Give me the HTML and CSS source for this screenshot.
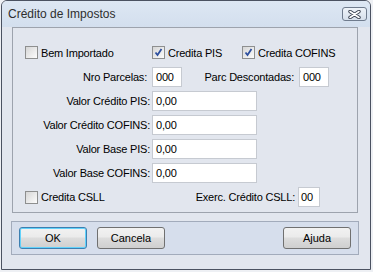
FILE: index.html
```html
<!DOCTYPE html>
<html lang="pt">
<head>
    <meta charset="UTF-8">
    <title>Crédito de Impostos</title>
    <link rel="stylesheet" href="styles.css">
</head>
<body>

    <div class="window">
        <div class="titlebar">
            <span class="title">Crédito de Impostos</span>
            <button class="close">
                <svg width="13" height="9" viewBox="0 0 13 9">
                    <path d="M2 1.5 L11 7.5 M11 1.5 L2 7.5" stroke="#3b4352" stroke-width="3.4" stroke-linecap="round"/>
                    <path d="M2 1.5 L11 7.5 M11 1.5 L2 7.5" stroke="#ffffff" stroke-width="1.6" stroke-linecap="round"/>
                </svg>
            </button>
        </div>

        <div class="group">
            <div class="row checks">
                <label class="chk chk-bem"><span class="box"></span>Bem Importado</label>
                <label class="chk chk-pis">
                    <span class="box">
                        <svg width="11" height="11" viewBox="0 0 11 11"><path d="M2.5 5.5 L4.5 8 L8.5 2" fill="none" stroke="#2d4f9e" stroke-width="1.8"/></svg>
                    </span>Credita PIS
                </label>
                <label class="chk">
                    <span class="box">
                        <svg width="11" height="11" viewBox="0 0 11 11"><path d="M2.5 5.5 L4.5 8 L8.5 2" fill="none" stroke="#2d4f9e" stroke-width="1.8"/></svg>
                    </span>Credita COFINS
                </label>
            </div>

            <div class="row">
                <span class="lbl nro">Nro Parcelas:</span>
                <span class="field small">000</span>
                <span class="lbl2">Parc Descontadas:</span>
                <span class="field small">000</span>
            </div>
            <div class="row">
                <span class="lbl">Valor Crédito PIS:</span>
                <span class="field wide">0,00</span>
            </div>
            <div class="row">
                <span class="lbl">Valor Crédito COFINS:</span>
                <span class="field wide">0,00</span>
            </div>
            <div class="row">
                <span class="lbl">Valor Base PIS:</span>
                <span class="field wide">0,00</span>
            </div>
            <div class="row">
                <span class="lbl">Valor Base COFINS:</span>
                <span class="field wide">0,00</span>
            </div>
            <div class="row">
                <div class="csll">
                    <label class="chk"><span class="box"></span>Credita CSLL</label>
                    <span class="lbl3">Exerc. Crédito CSLL:</span>
                </div>
                <span class="field tiny">00</span>
            </div>
        </div>

        <div class="buttons">
            <button class="btn default">OK</button>
            <button class="btn">Cancela</button>
            <button class="btn help">Ajuda</button>
        </div>
    </div>

</body>
</html>
```

FILE: styles.css
```css
body{
    margin: 0;
    background-color: #eef0f4;
    font-family: "Liberation Sans", Arial, sans-serif;
    font-size: 11px;
    letter-spacing: -0.2px;
    color: #000;
}

.window{
    margin-left: 1px;
    width: 370px;
    height: 270px;
    box-sizing: border-box;
    border: 1px solid #4b5261;
    border-radius: 6px 6px 0 0;
    background-color: #e2e6ee;
    overflow: hidden;
}

.titlebar{
    height: 26px;
    display: flex;
    align-items: center;
    padding: 0 3px 0 6px;
    background: linear-gradient(#dde7f3, #d3dfee);
}

.title{
    flex: 1;
    font-size: 12px;
    letter-spacing: 0;
    color: #2e2e2e;
}

.close{
    width: 25px;
    height: 14px;
    padding: 0;
    display: flex;
    align-items: center;
    justify-content: center;
    border: 1px solid #6f7b8d;
    border-radius: 3px;
    background: linear-gradient(#eef3f9, #d6dfeb);
}

/* group box */
.group{
    margin-left: 10px;
    width: 346px;
    height: 186px;
    box-sizing: border-box;
    border: 1px solid #9da3ad;
    padding: 18px 0 0 12px;
    display: flex;
    flex-direction: column;
    gap: 4px;
}

.row{
    display: flex;
    align-items: center;
    height: 20px;
}

.row.checks{
    height: 13px;
    margin-bottom: 4px;
}

.chk{
    display: flex;
    align-items: center;
    gap: 3px;
}

.chk-bem{
    width: 127px;
}

.chk-pis{
    width: 90px;
}

.box{
    width: 13px;
    height: 13px;
    box-sizing: border-box;
    border: 1px solid #8e8f8f;
    background: linear-gradient(135deg, #d6d6d6, #fcfcfc);
    display: flex;
    align-items: center;
    justify-content: center;
}

.lbl{
    width: 127px;
    box-sizing: border-box;
    text-align: right;
    padding-right: 2px;
}

.lbl.nro{
    padding-right: 5px;
}

.lbl2{
    width: 117px;
    box-sizing: border-box;
    text-align: right;
    padding-right: 5px;
}

.csll{
    width: 273px;
    display: flex;
    align-items: center;
}

.lbl3{
    margin-left: auto;
    padding-right: 3px;
}

.field{
    height: 20px;
    box-sizing: border-box;
    border: 1px solid #c6cad1;
    background-color: #fff;
    padding: 0 3px;
    line-height: 18px;
}

.field.wide{
    width: 105px;
}

.field.small{
    width: 30px;
}

.field.tiny{
    width: 22px;
    padding: 0 2px;
}

/* button panel */
.buttons{
    margin: 8px 0 0 9px;
    width: 348px;
    height: 34px;
    box-sizing: border-box;
    border: 1px solid #a2abbb;
    background-color: #d6deec;
    display: flex;
    align-items: flex-start;
    gap: 10px;
    padding: 5px 7px 0 7px;
}

.btn{
    width: 68px;
    height: 22px;
    padding: 0;
    border: 1px solid #707070;
    border-radius: 3px;
    background: linear-gradient(#f2f2f2, #ebebeb 45%, #dddddd 50%, #cfcfcf);
    font-family: "Liberation Sans", Arial, sans-serif;
    font-size: 11px;
    color: #000;
}

.btn.default{
    border-color: #3c7fb1;
    box-shadow: inset 0 0 0 1px #62d2fb;
}

.btn.help{
    margin-left: auto;
}
```
